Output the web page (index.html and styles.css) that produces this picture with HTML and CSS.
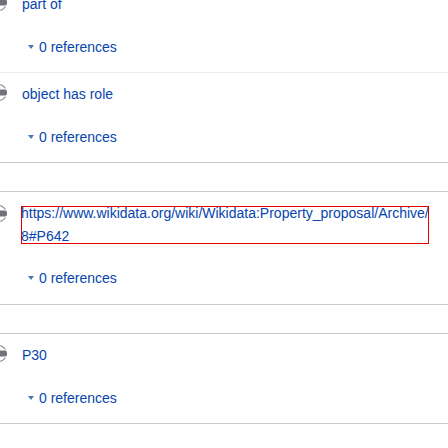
FILE: index.html
```html
<!DOCTYPE html>
<html>
<head>
<meta charset="utf-8">
<link rel="stylesheet" href="styles.css">
</head>
<body>
<div class="page">
  <div class="statement first light">
    <div class="value-row">
      <svg class="rank" viewBox="0 0 16 20" width="16" height="20"><path d="M2.5 6.5 Q8 -1 13.5 6.5" fill="none" stroke="#8a8f95" stroke-width="1.2"/><rect x="1" y="7.5" width="14" height="6" rx="2" fill="#6f7378"/><path d="M2.5 14.5 Q8 22 13.5 14.5" fill="none" stroke="#8a8f95" stroke-width="1.2"/></svg>
      <span class="value">part of</span>
    </div>
    <div class="refs"><span class="tri"></span>0 references</div>
  </div>
  <div class="statement">
    <div class="value-row">
      <svg class="rank" viewBox="0 0 16 20" width="16" height="20"><path d="M2.5 6.5 Q8 -1 13.5 6.5" fill="none" stroke="#8a8f95" stroke-width="1.2"/><rect x="1" y="7.5" width="14" height="6" rx="2" fill="#6f7378"/><path d="M2.5 14.5 Q8 22 13.5 14.5" fill="none" stroke="#8a8f95" stroke-width="1.2"/></svg>
      <span class="value">object has role</span>
    </div>
    <div class="refs"><span class="tri"></span>0 references</div>
  </div>
  <div class="spacer"></div>
  <div class="statement editing">
    <div class="value-row">
      <svg class="rank" viewBox="0 0 16 20" width="16" height="20"><path d="M2.5 6.5 Q8 -1 13.5 6.5" fill="none" stroke="#8a8f95" stroke-width="1.2"/><rect x="1" y="7.5" width="14" height="6" rx="2" fill="#6f7378"/><path d="M2.5 14.5 Q8 22 13.5 14.5" fill="none" stroke="#8a8f95" stroke-width="1.2"/></svg>
      <div class="url-box" contenteditable="true" spellcheck="false"><div class="url-text">https://www.wikidata.org/wiki/Wikidata:Property_proposal/Archive/<br>8#P642</div></div>
    </div>
    <div class="refs"><span class="tri"></span>0 references</div>
  </div>
  <div class="spacer"></div>
  <div class="statement">
    <div class="value-row">
      <svg class="rank" viewBox="0 0 16 20" width="16" height="20"><path d="M2.5 6.5 Q8 -1 13.5 6.5" fill="none" stroke="#8a8f95" stroke-width="1.2"/><rect x="1" y="7.5" width="14" height="6" rx="2" fill="#6f7378"/><path d="M2.5 14.5 Q8 22 13.5 14.5" fill="none" stroke="#8a8f95" stroke-width="1.2"/></svg>
      <span class="value">P30</span>
    </div>
    <div class="refs"><span class="tri"></span>0 references</div>
  </div>
</div>
</body>
</html>
```

FILE: styles.css
```css
html, body {
  margin: 0;
  padding: 0;
  background: #fff;
  overflow: hidden;
}
body {
  font-family: "Liberation Sans", Arial, sans-serif;
  font-size: 14px;
  color: #0645ad;
}
.page {
  width: 448px;
}
.statement {
  border-bottom: 1px solid #c8ccd1;
  padding-top: 11px;
  padding-bottom: 15px;
}
.statement.first {
  margin-top: -17px;
}
.statement.light {
  border-bottom-color: #eaecf0;
}
.spacer {
  height: 28px;
  border-bottom: 1px solid #c8ccd1;
}
.value-row {
  display: flex;
  align-items: flex-start;
  height: 20px;
}
.rank {
  flex: none;
  margin-left: -8px;
  margin-right: 14px;
  margin-top: -2px;
}
.value {
  font-size: 14px;
  line-height: 20px;
}
.refs {
  margin-top: 23px;
  padding-left: 28px;
  font-size: 14px;
  line-height: 20px;
  display: flex;
  align-items: center;
}
.tri {
  flex: none;
  width: 0;
  height: 0;
  border-left: 3px solid transparent;
  border-right: 3px solid transparent;
  border-top: 4px solid #4a78b5;
  margin-right: 5px;
}
.statement.editing {
  padding-top: 14px;
  padding-bottom: 16px;
}
.statement.editing .value-row {
  height: 38px;
}
.statement.editing .rank {
  margin-top: -3px;
}
.statement.editing .refs {
  margin-top: 24px;
}
.url-box {
  box-sizing: border-box;
  width: 408px;
  height: 38px;
  margin-left: -1px;
  border: 1px solid #e40000;
  overflow: hidden;
  outline: none;
  background: #fff;
}
.url-text {
  margin-top: -5px;
  margin-left: -1px;
  white-space: nowrap;
  font-size: 14px;
  line-height: 23px;
  color: #0645ad;
}
```
